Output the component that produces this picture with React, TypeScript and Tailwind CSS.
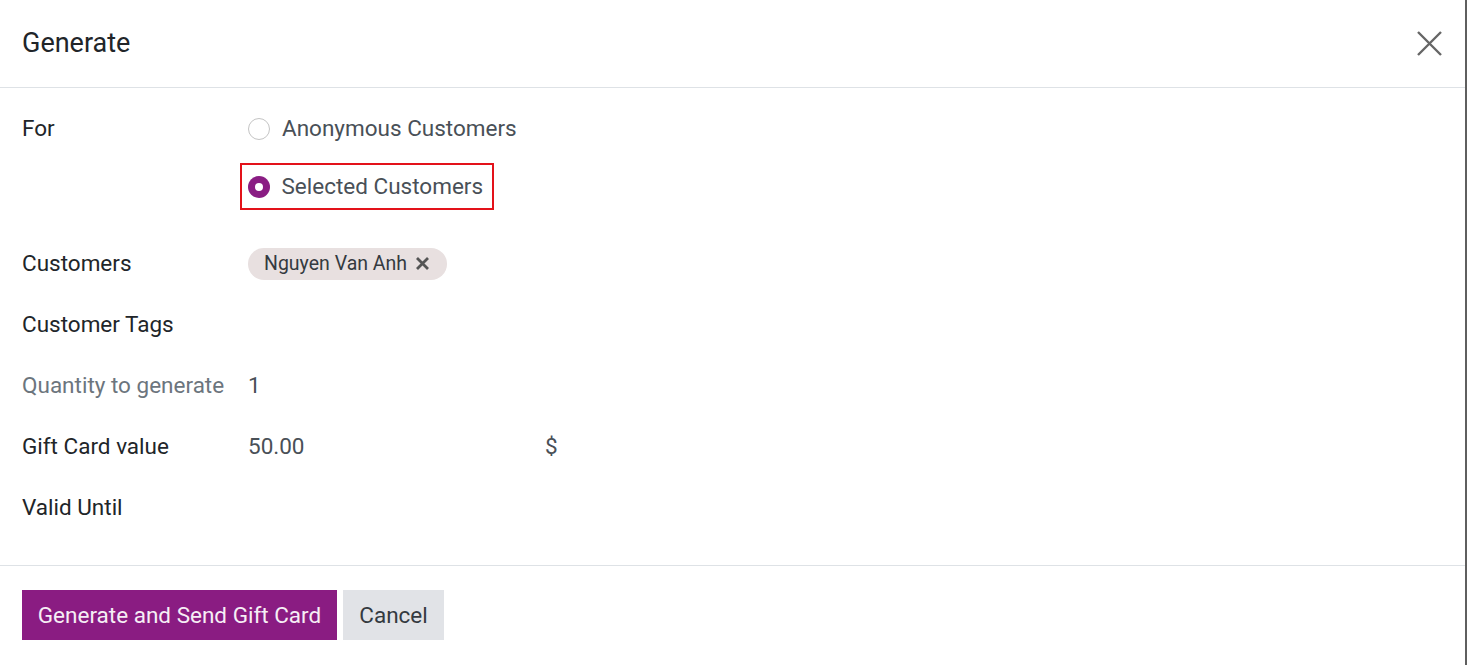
import React from 'react';

const font = { fontFamily: 'Roboto, "Noto Sans", sans-serif' };

function Radio({ checked }: { checked?: boolean }) {
  if (checked) {
    return (
      <span className="flex h-[22px] w-[22px] shrink-0 items-center justify-center rounded-full bg-[#8a1d83]">
        <span className="h-[8px] w-[8px] rounded-full bg-white" />
      </span>
    );
  }
  return <span className="h-[22px] w-[22px] shrink-0 rounded-full border border-[#c4c4c4] bg-white" />;
}

function Row({ label, muted, children }: { label: string; muted?: boolean; children?: React.ReactNode }) {
  return (
    <div className="grid h-[61px] grid-cols-[226px_1fr] items-center">
      <div className={muted ? 'text-[#6c757d]' : 'text-[#212529]'}>{label}</div>
      <div className="flex items-center text-[#495057]">{children}</div>
    </div>
  );
}

export default function App() {
  return (
    <div
      className="flex h-[665px] w-full flex-col border-r-2 border-[#5f5f5f] bg-white text-[22.5px] leading-none"
      style={font}
    >
      {/* header */}
      <div className="flex h-[88px] shrink-0 items-center justify-between border-b border-[#dee2e6] pl-[22px] pr-[23px]">
        <h1 className="text-[27px] text-[#212529]">Generate</h1>
        <button className="text-[#666]" aria-label="Close">
          <svg width="25" height="25" viewBox="0 0 25 25" fill="none" stroke="currentColor" strokeWidth="2.4">
            <path d="M1 1L24 24M24 1L1 24" />
          </svg>
        </button>
      </div>

      {/* body */}
      <div className="flex-1 px-[22px] pt-[17px]">
        <div className="grid grid-cols-[226px_1fr]">
          <div className="flex h-[46px] items-center text-[#212529]">For</div>
          <div className="flex flex-col items-start gap-[11px] text-[#495057]">
            <label className="-ml-[8px] flex h-[47px] items-center gap-[12px] border-2 border-transparent pl-[6px] pr-[9px]">
              <Radio />
              <span>Anonymous Customers</span>
            </label>
            <label className="-ml-[8px] flex h-[47px] items-center gap-[12px] border-[2.5px] border-[#e3121a] pl-[5.5px] pr-[9px]">
              <Radio checked />
              <span>Selected Customers</span>
            </label>
          </div>
        </div>

        <div className="mt-[23px]">
          <Row label="Customers">
            <span className="flex h-[32px] items-center gap-[8px] rounded-full bg-[#e8e0e0] pl-[16px] pr-[17px] text-[19.5px] text-[#343a40]">
              Nguyen Van Anh
              <svg width="15" height="15" viewBox="0 0 15 15" stroke="#555" strokeWidth="2.8" fill="none">
                <path d="M2 2L13 13M13 2L2 13" />
              </svg>
            </span>
          </Row>
          <Row label="Customer Tags" />
          <Row label="Quantity to generate" muted>
            <span>1</span>
          </Row>
          <Row label="Gift Card value">
            <span className="w-[297px]">50.00</span>
            <span>$</span>
          </Row>
          <Row label="Valid Until" />
        </div>
      </div>

      {/* footer */}
      <div className="flex h-[100px] shrink-0 items-start gap-[6px] border-t border-[#dee2e6] px-[22px] pt-[24px]">
        <button className="h-[50px] w-[315px] bg-[#8a1c82] text-[22.5px] text-[#f6eef5]">
          Generate and Send Gift Card
        </button>
        <button className="h-[50px] w-[101px] bg-[#e1e3e7] text-[22.5px] text-[#343a40]">Cancel</button>
      </div>
    </div>
  );
}
